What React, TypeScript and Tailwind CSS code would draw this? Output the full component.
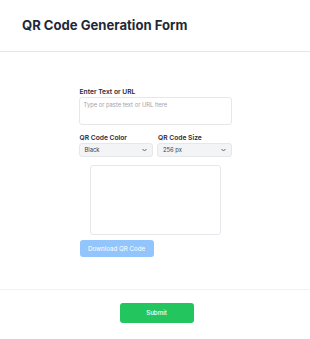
import React from 'react';

export default function App() {
  return (
    <div className="w-[310px] min-h-[339px] bg-white flex flex-col" style={{ fontFamily: 'Inter, "Liberation Sans", sans-serif' }}>
      {/* Header */}
      <div className="h-[52px] shrink-0 px-[22px] flex items-center border-b border-[#e5e7eb]">
        <h1 className="text-[13.1px] font-bold text-[#1f2937]">QR Code Generation Form</h1>
      </div>

      {/* Form body */}
      <div className="h-[238px] shrink-0 pt-[36px] flex flex-col items-center border-b border-[#f1f2f5]">
        <div className="w-[153px] flex flex-col">
          <label className="text-[6.7px] leading-[9px] font-semibold text-[#1f2937] pl-[1px]">Enter Text or URL</label>
          <div className="h-[28px] rounded-[3px] border border-[#e5e7eb] px-[4px] pt-[3px] text-[5.8px] leading-[8px] text-[#9ca3af]">
            Type or paste text or URL here
          </div>

          <div className="flex gap-[4px] mt-[9px]">
            <div className="flex-1 flex flex-col">
              <label className="text-[6.7px] leading-[9px] font-semibold text-[#1f2937] pl-[1px]">QR Code Color</label>
              <div className="h-[14px] rounded-[3px] border border-[#e5e7eb] bg-[#f3f4f6] flex items-center justify-between px-[5px] text-[5.8px] text-[#374151]">
                <span>Black</span>
                <svg width="5" height="4" viewBox="0 0 10 6" fill="none" stroke="#4b5563" strokeWidth="1.8"><path d="M1 1l4 4 4-4" /></svg>
              </div>
            </div>
            <div className="flex-1 flex flex-col">
              <label className="text-[6.7px] leading-[9px] font-semibold text-[#1f2937] pl-[1px]">QR Code Size</label>
              <div className="h-[14px] rounded-[3px] border border-[#e5e7eb] bg-[#f3f4f6] flex items-center justify-between px-[5px] text-[5.8px] text-[#374151]">
                <span>256 px</span>
                <svg width="5" height="4" viewBox="0 0 10 6" fill="none" stroke="#4b5563" strokeWidth="1.8"><path d="M1 1l4 4 4-4" /></svg>
              </div>
            </div>
          </div>

          <div className="self-center w-[131px] h-[70px] mt-[8px] rounded-[3px] border border-[#e5e7eb] bg-white"></div>

          <button className="self-start ml-[1px] mt-[5px] w-[74px] h-[17px] rounded-[3px] bg-[#93c5fd] text-white text-[6.2px]">
            Download QR Code
          </button>
        </div>
      </div>

      {/* Footer */}
      <div className="flex justify-center pt-[13px] pl-[3px]">
        <button className="w-[74px] h-[20px] rounded-[3px] bg-[#22c55e] text-white text-[6.2px] font-medium">Submit</button>
      </div>
    </div>
  );
}
